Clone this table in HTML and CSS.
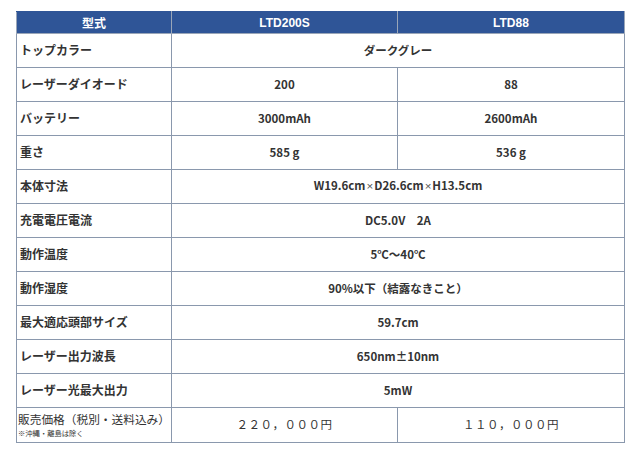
FILE: index.html
```html
<!DOCTYPE html>
<html lang="ja">
<head>
<meta charset="utf-8">
<link rel="stylesheet" href="styles.css">
</head>
<body>
<table class="spec">
  <colgroup>
    <col class="c1"><col class="c2"><col class="c3">
  </colgroup>
  <thead>
    <tr><th>型式</th><th>LTD200S</th><th>LTD88</th></tr>
  </thead>
  <tbody>
    <tr><td class="label">トップカラー</td><td colspan="2">ダークグレー</td></tr>
    <tr><td class="label">レーザーダイオード</td><td>200</td><td>88</td></tr>
    <tr><td class="label">バッテリー</td><td>3000mAh</td><td>2600mAh</td></tr>
    <tr><td class="label">重さ</td><td>585 g</td><td>536 g</td></tr>
    <tr><td class="label">本体寸法</td><td colspan="2">W19.6cm<span class="x">×</span>D26.6cm<span class="x">×</span>H13.5cm</td></tr>
    <tr><td class="label">充電電圧電流</td><td colspan="2">DC5.0V　2A</td></tr>
    <tr><td class="label">動作温度</td><td colspan="2">5℃～40℃</td></tr>
    <tr><td class="label">動作湿度</td><td colspan="2">90%以下（結露なきこと）</td></tr>
    <tr><td class="label">最大適応頭部サイズ</td><td colspan="2">59.7cm</td></tr>
    <tr><td class="label">レーザー出力波長</td><td colspan="2">650nm±10nm</td></tr>
    <tr><td class="label">レーザー光最大出力</td><td colspan="2">5mW</td></tr>
    <tr class="price"><td class="label"><div class="main">販売価格（税別・送料込み）</div><div class="note">※沖縄・離島は除く</div></td><td>２２０，０００円</td><td>１１０，０００円</td></tr>
  </tbody>
</table>
</body>
</html>
```
FILE: styles.css
```css
html, body {
  margin: 0;
  padding: 0;
  background: #ffffff;
}
.spec {
  margin: 11px 0 0 16px;
  width: 608px;
  border-collapse: collapse;
  table-layout: fixed;
  font-family: "Noto Sans CJK JP", "Liberation Sans", sans-serif;
  color: #333333;
  font-size: 12px;
}
.c1 { width: 155px; }
.c2 { width: 226px; }
.c3 { width: 227px; }
.spec th {
  background: #2f5597;
  color: #ffffff;
  font-family: "Liberation Sans", "Noto Sans CJK JP", sans-serif;
  font-weight: bold;
  font-size: 12px;
  height: 21px;
  padding: 0;
  border: 1px solid #9aa6b8;
  border-top-color: #2f5597;
  text-align: center;
}
.spec td {
  height: 33px;
  padding: 0;
  border: 1px solid #8a98ad;
  text-align: center;
  font-weight: 600;
  font-size: 11.5px;
  line-height: 1.2;
}
.spec td.label {
  text-align: left;
  padding-left: 3px;
  font-weight: bold;
  font-size: 12px;
}
.x {
  font-family: "Liberation Sans", sans-serif;
  font-weight: normal;
  color: #555555;
  padding: 0 1px;
}
.price td {
  height: 34px;
  font-weight: 400;
  font-size: 11.5px;
  letter-spacing: 0.5px;
}
.price td.label {
  padding-left: 1px;
  font-weight: 400;
  letter-spacing: 0;
}
.price .main {
  font-size: 11.7px;
  line-height: 16px;
}
.price .note {
  font-size: 7.3px;
  line-height: 12px;
}
```
